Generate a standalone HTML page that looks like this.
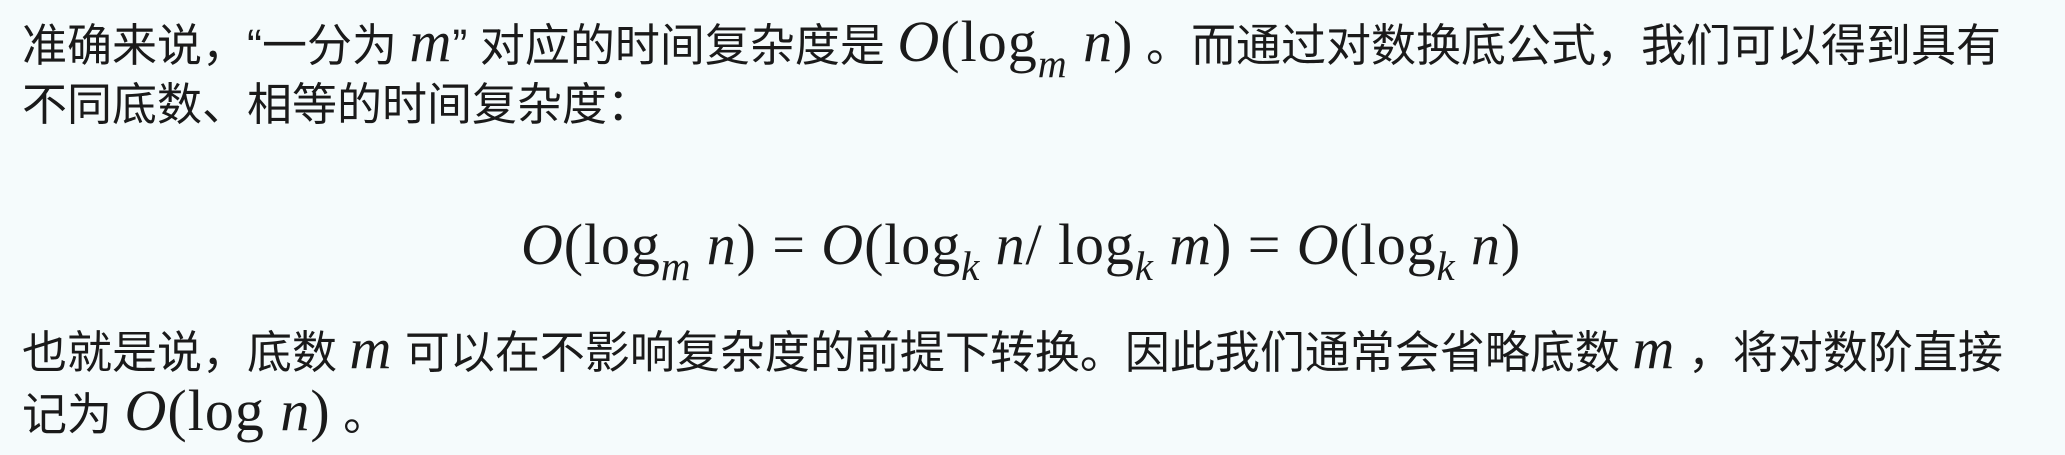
<!DOCTYPE html>
<html><head><meta charset="utf-8"><style>
html,body{margin:0;padding:0;}
body{width:2065px;height:455px;background:#f5fbfc;position:relative;overflow:hidden;color:#1a1a1a;
font-family:"Liberation Sans","Noto Sans CJK SC",sans-serif;font-size:45px;}
.l{position:absolute;left:22px;white-space:nowrap;line-height:60px;}
.m{font-family:"Liberation Serif",serif;font-style:italic;font-size:58px;letter-spacing:1px;}
.r{font-family:"Liberation Serif",serif;font-size:58px;letter-spacing:1px;}
sub{font-family:"Liberation Serif",serif;font-style:italic;font-size:40px;vertical-align:-16px;line-height:0;}
.f .m,.f .r{font-size:58px;letter-spacing:0.9px;}
.f sub{font-size:41px;}
</style></head><body>
<div class="l" style="top:12px">准确来说，“一分为 <span class="m">m</span>” 对应的时间复杂度是 <span class="m">O</span><span class="r">(log<sub>m</sub> </span><span class="m">n</span><span class="r">)</span> 。而通过对数换底公式，我们可以得到具有</div>
<div class="l" style="top:75px">不同底数、相等的时间复杂度：</div>
<div class="l f" style="top:215px;left:521px"><span class="m">O</span><span class="r">(log<sub>m</sub> </span><span class="m">n</span><span class="r">) = </span><span class="m">O</span><span class="r">(log<sub>k</sub> </span><span class="m">n</span><span class="r">/ log<sub>k</sub> </span><span class="m">m</span><span class="r">) = </span><span class="m">O</span><span class="r">(log<sub>k</sub> </span><span class="m">n</span><span class="r">)</span></div>
<div class="l" style="top:319px">也就是说，底数 <span class="m">m</span> 可以在不影响复杂度的前提下转换。因此我们通常会省略底数 <span class="m">m</span> ，将对数阶直接</div>
<div class="l" style="top:381px">记为 <span class="m">O</span><span class="r">(log </span><span class="m">n</span><span class="r">)</span> 。</div>
</body></html>
